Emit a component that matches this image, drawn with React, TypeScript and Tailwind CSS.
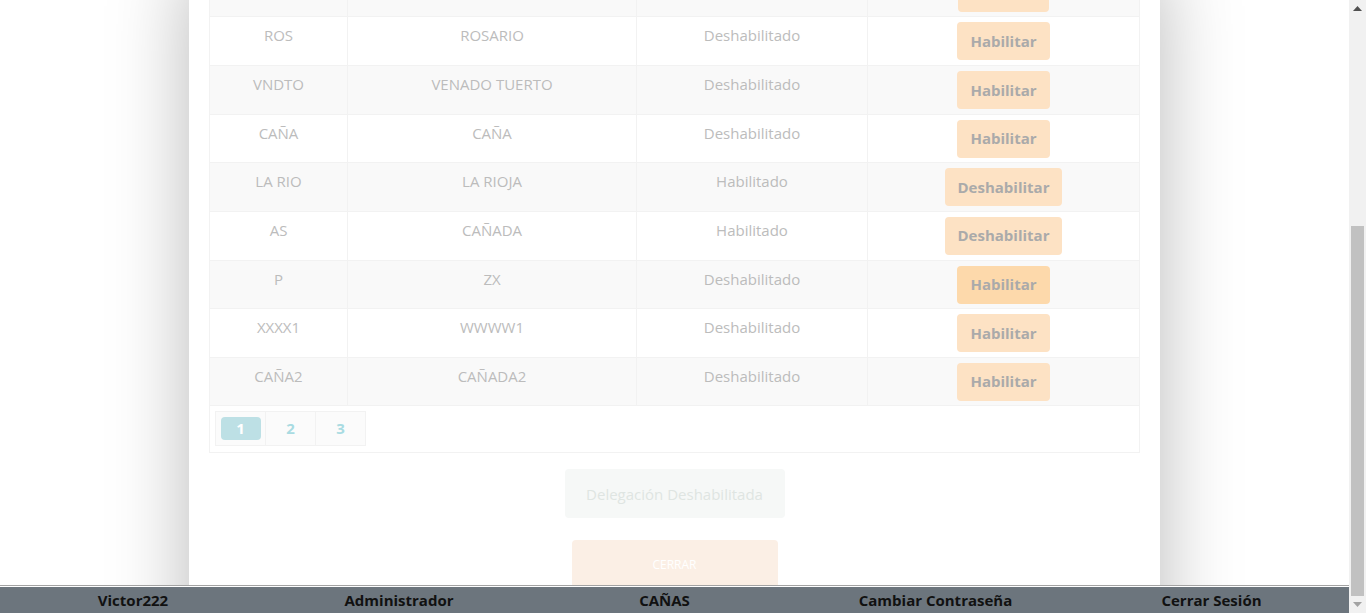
const rows = [
  { code: "", name: "", state: "", action: "", strong: false, striped: true },
  { code: "ROS", name: "ROSARIO", state: "Deshabilitado", action: "Habilitar", strong: false, striped: false },
  { code: "VNDTO", name: "VENADO TUERTO", state: "Deshabilitado", action: "Habilitar", strong: false, striped: true },
  { code: "CAÑA", name: "CAÑA", state: "Deshabilitado", action: "Habilitar", strong: false, striped: false },
  { code: "LA RIO", name: "LA RIOJA", state: "Habilitado", action: "Deshabilitar", strong: false, striped: true },
  { code: "AS", name: "CAÑADA", state: "Habilitado", action: "Deshabilitar", strong: false, striped: false },
  { code: "P", name: "ZX", state: "Deshabilitado", action: "Habilitar", strong: true, striped: true },
  { code: "XXXX1", name: "WWWW1", state: "Deshabilitado", action: "Habilitar", strong: false, striped: false },
  { code: "CAÑA2", name: "CAÑADA2", state: "Deshabilitado", action: "Habilitar", strong: false, striped: true },
]

const footerItems = ["Victor222", "Administrador", "CAÑAS", "Cambiar Contraseña", "Cerrar Sesión"]

function Row({ row }: { row: (typeof rows)[number] }) {
  return (
    <div
      className={
        "grid grid-cols-[138px_289px_231px_1fr] h-[48.625px] border-b border-[#f2f2f2] " +
        (row.striped ? "bg-[#f9f9f9]" : "bg-white")
      }
    >
      <div className="pt-2 text-center border-r border-[#f2f2f2]">{row.code}</div>
      <div className="pt-2 text-center border-r border-[#f2f2f2]">{row.name}</div>
      <div className="pt-2 text-center border-r border-[#f2f2f2]">{row.state}</div>
      <div className="pt-[5px] flex justify-center items-start">
        <button
          className={
            "h-[38px] min-w-[91px] px-[13px] rounded-[4px] font-bold text-[15px] text-[#aaaaaa] " +
            (row.strong ? "bg-[#fdd9ab]" : "bg-[#fde2c4]")
          }
        >
          {row.action}
        </button>
      </div>
    </div>
  )
}

export default function App(): React.JSX.Element {
  return (
    <div className="flex h-[613px] w-full bg-white overflow-hidden font-['Open_Sans',sans-serif]">
      <div className="flex-1 flex flex-col min-w-0">
        <main className="flex-1 overflow-hidden">
          <div className="w-[971px] mx-auto -mt-[31.2px] bg-white px-5 pb-24 shadow-[0_0_75px_rgba(0,0,0,0.28)]">
            <div className="border-x border-b border-[#f2f2f2] text-[15px] leading-[21px] text-[#bcbcbc]">
              {rows.map((r, i) => (
                <Row key={i} row={r} />
              ))}
              <div className="p-[5px] h-[46px]">
                <div className="flex w-[151px] border border-[#f2f2f2] bg-[#fbfbfb] h-[35px]">
                  <div className="w-[50px] flex items-center justify-center border-r border-[#f2f2f2]">
                    <span className="w-[40px] h-[23px] rounded-[4px] bg-[#bde0e5] text-white font-bold text-[15px] flex items-center justify-center">
                      1
                    </span>
                  </div>
                  <div className="w-[50px] flex items-center justify-center border-r border-[#f2f2f2] text-[#a9dbe2] font-bold">
                    2
                  </div>
                  <div className="w-[49px] flex items-center justify-center text-[#a9dbe2] font-bold">3</div>
                </div>
              </div>
            </div>
            <div className="flex flex-col items-center">
              <button className="mt-[16px] w-[220px] h-[49px] rounded-[4px] bg-[#f6f8f7] text-[15px] text-[#dfe5e2]">
                Delegación Deshabilitada
              </button>
              <button className="mt-[22px] w-[206px] h-[50px] rounded-[4px] bg-[#fbefe5] text-[12px] text-white">
                CERRAR
              </button>
            </div>
          </div>
        </main>
        <div className="h-px bg-[#a3a3a3]" />
        <div className="h-px bg-white" />
        <footer className="h-[26px] bg-[#6c757d] grid grid-cols-[266px_266px_265px_277px_1fr] items-center">
          {footerItems.map((t) => (
            <div key={t} className="text-center font-bold text-[15px] text-[#111] leading-none">
              {t}
            </div>
          ))}
        </footer>
      </div>
      <div className="w-[17px] bg-[#f1f1f1] flex flex-col items-center">
        <div className="h-[17px] flex items-center justify-center">
          <svg width="9" height="5" viewBox="0 0 9 5">
            <path d="M4.5 0 L9 5 L0 5 Z" fill="#505050" />
          </svg>
        </div>
        <div className="flex-1 w-full flex flex-col px-[2px]">
          <div className="h-[209px]" />
          <div className="flex-1 bg-[#c1c1c1]" />
        </div>
        <div className="h-[17px] flex items-center justify-center">
          <svg width="9" height="5" viewBox="0 0 9 5">
            <path d="M0 0 L9 0 L4.5 5 Z" fill="#a3a3a3" />
          </svg>
        </div>
      </div>
    </div>
  )
}
